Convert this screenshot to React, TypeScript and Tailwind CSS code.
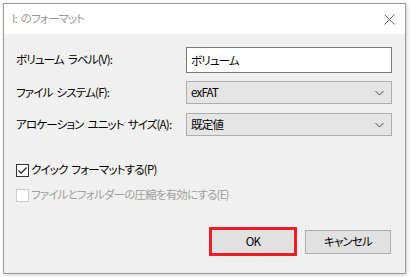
import React, { useState } from 'react';

const font = "font-['Noto_Sans_CJK_JP',sans-serif] [font-feature-settings:'palt'_1]";

const Chevron = () => (
  <svg width="9" height="6" viewBox="0 0 9 6" className="text-[#444]">
    <path d="M0.5 1 L4.5 5 L8.5 1" fill="none" stroke="currentColor" strokeWidth="1" />
  </svg>
);

const Select: React.FC<{ value: string; height: string }> = ({ value, height }) => (
  <div className={`flex-1 flex items-center justify-between bg-[#e5e5e5] border border-[#adadad] pl-[4px] pr-[7px] ${height}`}>
    <span className="text-black">{value}</span>
    <Chevron />
  </div>
);

const Check: React.FC<{ checked: boolean; disabled?: boolean }> = ({ checked, disabled }) => (
  <div className={`w-[13px] h-[13px] shrink-0 border flex items-center justify-center bg-white ${disabled ? 'border-[#cccccc]' : 'border-[#333]'}`}>
    {checked && (
      <svg width="11" height="11" viewBox="0 0 11 11">
        <path d="M1.5 5.5 L4.2 8.2 L9.5 2.5" fill="none" stroke="#222" strokeWidth="1.2" />
      </svg>
    )}
  </div>
);

export default function App() {
  const [label, setLabel] = useState('ボリューム');
  const [quick, setQuick] = useState(true);

  return (
    <div className={`w-[410px] h-[277px] bg-white p-[3px] text-[11.5px] tracking-[-0.8px] [word-spacing:2px] ${font}`}>
      <div className="w-[403px] h-[271px] border border-[#9a9a9a] bg-[#f0f0f0] flex flex-col shadow-[1px_1px_4px_rgba(0,0,0,0.2)]">
        <div className="h-[30px] bg-white flex items-center justify-between pl-[8px] pr-[10px]">
          <span className="text-[#999999]">I: のフォーマット</span>
          <svg width="11" height="11" viewBox="0 0 11 11">
            <path d="M0.5 0.5 L10.5 10.5 M10.5 0.5 L0.5 10.5" stroke="#555" strokeWidth="0.9" />
          </svg>
        </div>

        <div className="flex flex-col pt-[13px] pl-[12px] pr-[13px] text-black">
          <div className="flex items-center h-[26px]">
            <span className="w-[170px] shrink-0 whitespace-nowrap">ボリューム ラベル(V):</span>
            <input
              value={label}
              onChange={(e) => setLabel(e.target.value)}
              className="flex-1 min-w-0 h-[26px] border border-[#7a7a7a] bg-white px-[4px] outline-none"
            />
          </div>
          <div className="flex items-center h-[23px] mt-[8px]">
            <span className="w-[170px] shrink-0 whitespace-nowrap">ファイル システム(F):</span>
            <Select value="exFAT" height="h-[23px]" />
          </div>
          <div className="flex items-center h-[23px] mt-[9px]">
            <span className="w-[170px] shrink-0 whitespace-nowrap">アロケーション ユニット サイズ(A):</span>
            <Select value="既定値" height="h-[23px]" />
          </div>

          <div className="flex items-center gap-[2px] h-[16px] mt-[26px] cursor-default" onClick={() => setQuick(!quick)}>
            <Check checked={quick} />
            <span className="whitespace-nowrap">クイック フォーマットする(P)</span>
          </div>
          <div className="flex items-center gap-[2px] h-[16px] mt-[9px] text-[#a0a0a0]">
            <Check checked={false} disabled />
            <span className="whitespace-nowrap">ファイルとフォルダーの圧縮を有効にする(E)</span>
          </div>

          <div className="flex justify-end items-center gap-[8px] mt-[24px] pr-[1px]">
            <div className="border-[3px] border-[#ee1c25]">
              <button className="w-[82px] h-[23px] bg-[#e1e1e1]">OK</button>
            </div>
            <button className="w-[86px] h-[24px] bg-[#e1e1e1] border border-[#adadad]">キャンセル</button>
          </div>
        </div>
      </div>
    </div>
  );
}
